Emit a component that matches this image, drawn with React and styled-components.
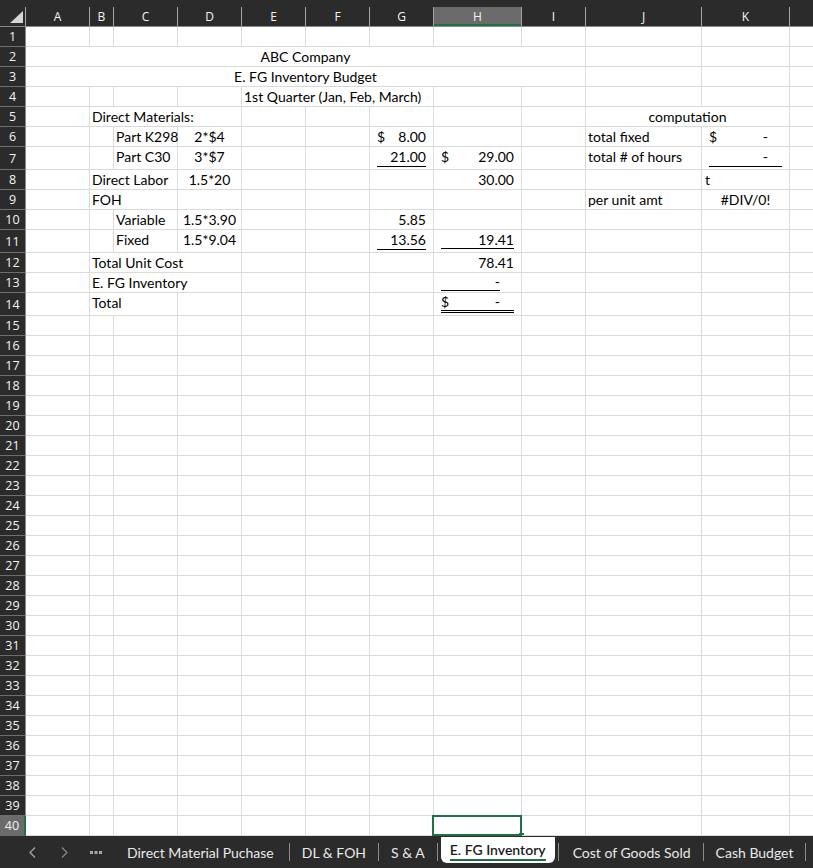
import React from "react";
import styled, { createGlobalStyle } from "styled-components";

const GlobalStyle = createGlobalStyle`
  html, body {
    margin: 0;
    padding: 0;
    background: #ffffff;
  }
  #root {
    width: 813px;
    height: 868px;
    overflow: hidden;
  }
`;

const GRID_LINE = "#dadada";
const HEAD_BG = "#2b2b2b";
const HEAD_LINE = "#8a8a8a";
const GREEN = "#1e7145";

const COLS = [
  { key: "A", w: 64 },
  { key: "B", w: 24 },
  { key: "C", w: 64 },
  { key: "D", w: 64 },
  { key: "E", w: 64 },
  { key: "F", w: 64 },
  { key: "G", w: 64 },
  { key: "H", w: 88 },
  { key: "I", w: 64 },
  { key: "J", w: 116 },
  { key: "K", w: 88 },
  { key: "L", w: 64 },
];
const TEMPLATE = `26px ${COLS.map((c) => c.w + "px").join(" ")}`;

const TALL_ROWS = [7, 11, 14];
const ACTIVE_ROW = 40;
const ACTIVE_COL = "H";

// cell contents by row / column
const ROWS = {
  2: { A: { span: 9, align: "center", text: "ABC Company" } },
  3: { A: { span: 9, align: "center", text: "E. FG Inventory Budget" } },
  4: { E: { span: 3, text: "1st Quarter (Jan, Feb, March)" } },
  5: {
    B: { span: 3, text: "Direct Materials:" },
    J: { span: 2, align: "center", text: "computation" },
  },
  6: {
    C: { text: "Part K298" },
    D: { align: "center", text: "2*$4" },
    G: { acct: "8.00", sym: true },
    J: { text: "total fixed" },
    K: { acct: "-", sym: true },
  },
  7: {
    C: { text: "Part C30" },
    D: { align: "center", text: "3*$7" },
    G: { acct: "21.00", ul: 1, gap: 1, pb: 2 },
    H: { acct: "29.00", sym: true },
    J: { text: "total # of hours" },
    K: { acct: "-", ul: 1, gap: 1, pb: 2 },
  },
  8: {
    B: { span: 2, text: "Direct Labor" },
    D: { align: "center", text: "1.5*20" },
    H: { acct: "30.00" },
    K: { text: "t", pl: 3 },
  },
  9: {
    B: { span: 2, text: "FOH" },
    J: { text: "per unit amt" },
    K: { align: "center", text: "#DIV/0!" },
  },
  10: {
    C: { text: "Variable" },
    D: { align: "center", text: "1.5*3.90" },
    G: { acct: "5.85" },
  },
  11: {
    C: { text: "Fixed" },
    D: { align: "center", text: "1.5*9.04" },
    G: { acct: "13.56", ul: 1, gap: 1, pb: 2 },
    H: { acct: "19.41", ul: 1, gap: 0, pb: 3 },
  },
  12: {
    B: { span: 3, text: "Total Unit Cost" },
    H: { acct: "78.41" },
  },
  13: {
    B: { span: 3, text: "E. FG Inventory" },
    H: { acct: "-", ul: 1, gap: 0, pb: 1, tight: true },
  },
  14: {
    B: { span: 2, text: "Total" },
    H: { acct: "-", sym: true, ul: 2, gap: 0, pb: 2 },
  },
};

const TABS = [
  "Direct Material Puchase",
  "DL & FOH",
  "S & A",
  "E. FG Inventory",
  "Cost of Goods Sold",
  "Cash Budget",
];
const ACTIVE_TAB = "E. FG Inventory";

const Page = styled.div`
  display: flex;
  flex-direction: column;
  width: 813px;
  height: 868px;
  background: #ffffff;
`;

const Sheet = styled.div`
  flex: 1;
  overflow: hidden;
`;

const HeaderRow = styled.div`
  display: grid;
  grid-template-columns: ${TEMPLATE};
  height: 27px;
  box-sizing: border-box;
  align-items: end;
  background: ${HEAD_BG};
  border-bottom: 1px solid ${HEAD_LINE};
`;

const ColHead = styled.div`
  height: 19px;
  box-sizing: border-box;
  display: flex;
  align-items: center;
  justify-content: center;
  border-right: 1px solid #a3a3a3;
  background: ${(p) => (p.$active ? "#6b6b6b" : "transparent")};
  box-shadow: ${(p) => (p.$active ? `inset 0 -2px 0 ${GREEN}` : "none")};
  color: #f4f4f4;
  font-family: "Open Sans", "Liberation Sans", sans-serif;
  font-size: 12px;
`;

const Corner = styled(ColHead)`
  justify-content: flex-start;
`;

const Row = styled.div`
  display: grid;
  grid-template-columns: ${TEMPLATE};
  height: ${(p) => p.$h}px;
`;

const RowHead = styled.div`
  box-sizing: border-box;
  display: flex;
  align-items: center;
  justify-content: center;
  background: ${(p) => (p.$active ? "#6b6b6b" : HEAD_BG)};
  border-bottom: 1px solid #6e6e6e;
  border-right: ${(p) =>
    p.$active ? `2px solid ${GREEN}` : `1px solid ${HEAD_LINE}`};
  color: #f4f4f4;
  font-family: "Open Sans", "Liberation Sans", sans-serif;
  font-size: 12.5px;
`;

const Cell = styled.div`
  position: relative;
  grid-column: span ${(p) => p.$span};
  box-sizing: border-box;
  display: flex;
  align-items: flex-end;
  justify-content: ${(p) =>
    p.$align === "center" ? "center" : p.$align === "right" ? "flex-end" : "flex-start"};
  padding: 0 ${(p) => (p.$acct ? 7 : 2)}px ${(p) => p.$pb}px
    ${(p) => (p.$acct ? 7 : p.$pl)}px;
  border-right: 1px solid ${GRID_LINE};
  border-bottom: 1px solid ${GRID_LINE};
  font-family: Lato, "Liberation Sans", sans-serif;
  font-size: 14px;
  line-height: 16px;
  color: #000000;
  white-space: nowrap;
`;

const Amount = styled.span`
  flex: 1;
  display: flex;
  justify-content: ${(p) => (p.$sym ? "space-between" : "flex-end")};
  padding-bottom: ${(p) => p.$gap}px;
  margin-right: ${(p) => (p.$tight ? 14 : 0)}px;
  border-bottom: ${(p) =>
    p.$ul === 2 ? "3px double #000" : p.$ul === 1 ? "1px solid #000" : "none"};
`;

const Value = styled.span`
  padding-right: ${(p) => (p.$dash ? 14 : 0)}px;
`;

const Selection = styled.div`
  position: absolute;
  left: -2px;
  top: -1px;
  right: -1px;
  bottom: -1px;
  border: 2px solid ${GREEN};
  pointer-events: none;
`;

const Handle = styled.div`
  position: absolute;
  right: -4px;
  bottom: -4px;
  width: 5px;
  height: 5px;
  background: ${GREEN};
`;

const TabBar = styled.div`
  display: flex;
  align-items: center;
  height: 32px;
  padding-left: 16px;
  background: ${HEAD_BG};
  font-family: Lato, "Liberation Sans", sans-serif;
  font-size: 14px;
`;

const NavButton = styled.div`
  width: 32px;
  height: 32px;
  display: flex;
  align-items: center;
  justify-content: center;
  color: ${(p) => (p.$dim ? "#8a8a8a" : "#a8a8a8")};
`;

const TabList = styled.div`
  display: flex;
  align-items: center;
  height: 100%;
`;

const Tab = styled.div`
  display: flex;
  align-items: center;
  padding: 0 ${(p) => (p.$first ? 15 : 12)}px;
  padding-left: ${(p) => (p.$first ? 15 : p.$afterActive ? 14 : 12)}px;
  color: #e8e8e8;
  white-space: nowrap;
`;

const ActiveTab = styled.div`
  align-self: flex-start;
  display: flex;
  align-items: center;
  justify-content: center;
  height: 26px;
  margin: 1px 3px 0;
  padding: 0 9px;
  background: #ffffff;
  border-radius: 0 0 6px 6px;
  color: #1b1b1b;
  font-weight: 600;
  white-space: nowrap;
`;

const ActiveLabel = styled.span`
  padding-top: 3px;
  padding-bottom: 1px;
  border-bottom: 2px solid ${GREEN};
  line-height: 16px;
`;

const TabSep = styled.div`
  width: 1px;
  height: 18px;
  background: #8c8c8c;
`;

const Chevron = ({ dir }) => (
  <svg width="7" height="11" viewBox="0 0 7 11">
    <polyline
      points={dir === "left" ? "6,0.5 1,5.5 6,10.5" : "1,0.5 6,5.5 1,10.5"}
      fill="none"
      stroke="currentColor"
      strokeWidth="1.2"
    />
  </svg>
);

const Dots = () => (
  <svg width="12" height="4" viewBox="0 0 12 4">
    <rect x="0" y="1" width="3" height="3" fill="currentColor" />
    <rect x="4.5" y="1" width="3" height="3" fill="currentColor" />
    <rect x="9" y="1" width="3" height="3" fill="currentColor" />
  </svg>
);

function buildCells(rowNum) {
  const spec = ROWS[rowNum] || {};
  const cells = [];
  let i = 0;
  while (i < COLS.length) {
    const key = COLS[i].key;
    const c = spec[key] || {};
    const span = c.span || 1;
    cells.push({ key, ...c, span });
    i += span;
  }
  return cells;
}

const SheetRow = ({ num }) => {
  const tall = TALL_ROWS.includes(num);
  const base = tall ? 4 : 1;
  const active = num === ACTIVE_ROW;
  return (
    <Row $h={tall ? 23 : 20}>
      <RowHead $active={active}>{num}</RowHead>
      {buildCells(num).map((c) => (
        <Cell
          key={c.key}
          $span={c.span}
          $align={c.align}
          $acct={c.acct !== undefined}
          $pb={c.pb !== undefined ? c.pb : base}
          $pl={c.pl || 2}
        >
          {c.acct !== undefined ? (
            <Amount
              $sym={c.sym}
              $ul={c.ul || 0}
              $gap={c.gap || 0}
              $tight={c.tight}
            >
              {c.sym && <span>$</span>}
              <Value $dash={c.acct === "-" && !c.tight}>{c.acct}</Value>
            </Amount>
          ) : (
            c.text
          )}
          {active && c.key === ACTIVE_COL && (
            <Selection>
              <Handle />
            </Selection>
          )}
        </Cell>
      ))}
    </Row>
  );
};

const App = () => {
  const rows = Array.from({ length: 40 }, (_, i) => i + 1);
  return (
    <Page>
      <GlobalStyle />
      <Sheet>
        <HeaderRow>
          <Corner>
            <svg width="25" height="19" viewBox="0 0 25 19">
              <polygon points="23,4 23,16 10,16" fill="#d6d6d6" />
            </svg>
          </Corner>
          {COLS.map((c) => (
            <ColHead key={c.key} $active={c.key === ACTIVE_COL}>
              {c.key === "L" ? "" : c.key}
            </ColHead>
          ))}
        </HeaderRow>
        {rows.map((n) => (
          <SheetRow key={n} num={n} />
        ))}
      </Sheet>
      <TabBar>
        <NavButton>
          <Chevron dir="left" />
        </NavButton>
        <NavButton $dim>
          <Chevron dir="right" />
        </NavButton>
        <NavButton>
          <Dots />
        </NavButton>
        <TabList>
          {TABS.map((t, i) => {
            const isActive = t === ACTIVE_TAB;
            const afterActive = i > 0 && TABS[i - 1] === ACTIVE_TAB;
            return (
              <React.Fragment key={t}>
                {i > 0 && <TabSep />}
                {isActive ? (
                  <ActiveTab>
                    <ActiveLabel>{t}</ActiveLabel>
                  </ActiveTab>
                ) : (
                  <Tab $first={i === 0} $afterActive={afterActive}>
                    {t}
                  </Tab>
                )}
              </React.Fragment>
            );
          })}
          <TabSep />
        </TabList>
      </TabBar>
    </Page>
  );
};

export default App;
